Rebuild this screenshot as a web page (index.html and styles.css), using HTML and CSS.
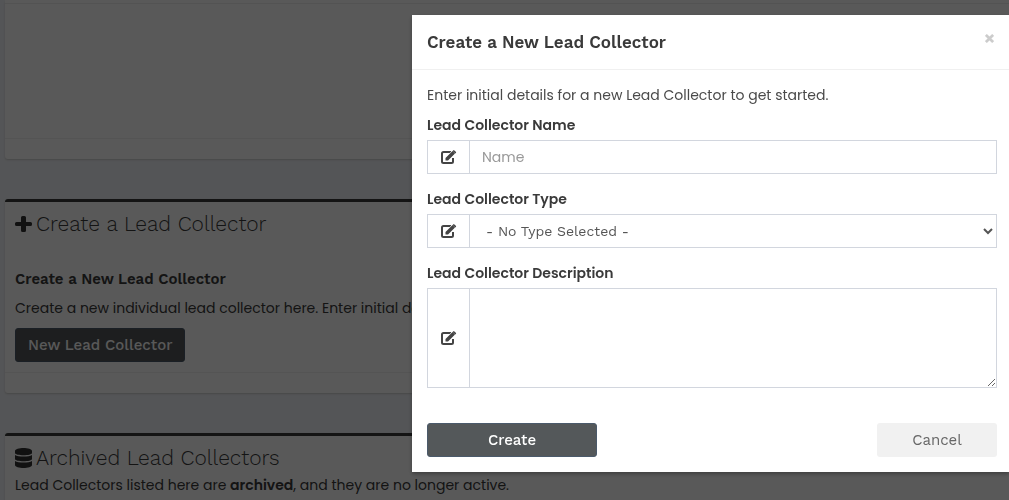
FILE: index.html
```
<!DOCTYPE html>
<html lang="en">
<head>
<meta charset="utf-8">
<title>Lead Collectors</title>
<meta name="viewport" content="width=device-width, initial-scale=1">
<link rel="stylesheet" href="styles.css">
</head>
<body>
<svg class="sprite" aria-hidden="true">
  <symbol id="edit" viewBox="0 0 16 14"><path fill="none" stroke="currentColor" stroke-width="2" d="M10 2H2.500Q1 2 1 3.500v8Q1 13 2.500 13h8Q12 13 12 11.500V8"/><path fill="currentColor" stroke="#fff" stroke-width="1.200" paint-order="stroke" d="M4.500 10.500V8L11.500 1l2.500 2.500-7 7zM12.200.4q.6-.6 1.200 0l1.400 1.400q.6.600 0 1.200l-.5.500L11.700.9z"/></symbol>
</svg>

<main class="page">
  <section class="panel listing">
    <div class="listing-body"></div>
    <div class="panel-foot"></div>
  </section>

  <section class="panel accent">
    <h2 class="panel-title">
      <svg class="title-icon" viewBox="0 0 17 18" aria-hidden="true"><path d="M7.500 1h2q1.500 0 1.500 1.500V7h4.500q1.500 0 1.500 1.500v1q0 1.500-1.500 1.500H11v4.500q0 1.500-1.500 1.500h-2Q6 17 6 15.500V11H1.500Q0 11 0 9.500v-1Q0 7 1.500 7H6V2.500Q6 1 7.500 1z"/></svg>
      Create a Lead Collector
    </h2>
    <div class="panel-body">
      <h3 class="subtitle">Create a New Lead Collector</h3>
      <p class="text">Create a new individual lead collector here. Enter initial details to get started.</p>
      <button class="btn btn-dark" type="button">New Lead Collector</button>
    </div>
    <div class="panel-foot"></div>
  </section>

  <section class="panel accent">
    <h2 class="panel-title">
      <svg class="title-icon" viewBox="0 0 17 20" aria-hidden="true"><path d="M0 3c0-4 17-4 17 0v2c0 3-17 3-17 0zM0 7c3 2 14 2 17 0v4c0 3-17 3-17 0zM0 13c3 2 14 2 17 0v4c0 4-17 4-17 0z"/></svg>
      Archived Lead Collectors
    </h2>
    <p class="text">Lead Collectors listed here are <strong>archived</strong>, and they are no longer active.</p>
  </section>
</main>

<div class="backdrop">
  <div class="modal" role="dialog" aria-modal="true" aria-labelledby="modal-title">
    <header class="modal-head">
      <h1 class="modal-title" id="modal-title">Create a New Lead Collector</h1>
      <button class="close" type="button" aria-label="Close"><svg viewBox="0 0 10 10" aria-hidden="true"><path d="M1 1l8 8M9 1L1 9"/></svg></button>
    </header>
    <form class="modal-body">
      <p class="intro">Enter initial details for a new Lead Collector to get started.</p>
      <div class="field">
        <label for="name">Lead Collector Name</label>
        <div class="group">
          <span class="addon"><svg aria-hidden="true"><use href="#edit"/></svg></span>
          <input class="control" id="name" type="text" placeholder="Name">
        </div>
      </div>
      <div class="field">
        <label for="type">Lead Collector Type</label>
        <div class="group">
          <span class="addon"><svg aria-hidden="true"><use href="#edit"/></svg></span>
          <select class="control select" id="type"><option>- No Type Selected -</option></select>
        </div>
      </div>
      <div class="field">
        <label for="description">Lead Collector Description</label>
        <div class="group">
          <span class="addon"><svg aria-hidden="true"><use href="#edit"/></svg></span>
          <textarea class="control area" id="description"></textarea>
        </div>
      </div>
      <div class="actions">
        <button class="btn btn-dark create" type="button">Create</button>
        <button class="btn btn-light" type="button">Cancel</button>
      </div>
    </form>
  </div>
</div>
</body>
</html>
```
FILE: styles.css
```
* { box-sizing: border-box; }
body {
  margin: 0;
  height: 100vh;
  overflow: hidden;
  background: #f0f3f8;
  color: #3a3a3a;
  font: 400 14px/20px Poppins, Inter, sans-serif;
}
h1, h2, h3, p { margin: 0; }
strong { font-weight: 600; }
.sprite { display: none; }

.page {
  display: flex;
  flex-direction: column;
  gap: 40px;
  padding-left: 5px;
}
.panel {
  background: #fff;
  border-radius: 3px;
  box-shadow: 0 1px 2px #ccc;
}
.accent { border-top: 3px solid #393939; }
.listing-body {
  height: 138px;
  border-top: 3px solid #fff;
  box-shadow: inset 0 1px #eee;
}
.panel-foot {
  height: 21px;
  border-top: 1px solid #f0f0f0;
}
.panel-title {
  display: flex;
  align-items: center;
  gap: 4px;
  padding: 9px 10px 0;
  font: 300 21px/26px "Work Sans", Inter, sans-serif;
}
.title-icon { width: 17px; height: 20px; fill: #333; }
.panel-body { padding: 32px 10px 10px; }
.subtitle {
  margin-bottom: 9px;
  font: 600 15px/20px "Work Sans", Inter, sans-serif;
}
.text { white-space: nowrap; }
.panel-body .text { margin-bottom: 10px; }
.panel-title + .text { padding: 4px 10px 20px; }

.btn {
  height: 34px;
  padding: 0 12px;
  border: 1px solid transparent;
  border-radius: 3px;
  font: 500 15px/20px "Work Sans", Inter, sans-serif;
}
.btn-dark {
  background: #54585a;
  border-color: #4b5a6b;
  color: #fff;
}
.btn-light {
  width: 120px;
  background: #f1f1f1;
  color: #666;
  font-weight: 400;
}
.create { width: 170px; }

.backdrop {
  position: fixed;
  inset: 0;
  padding: 15px 0 0 412px;
  background: rgba(0, 0, 0, 0.65);
}
.modal {
  background: #fff;
  box-shadow: 0 2px 4px rgba(0, 0, 0, 0.3);
}
.modal-head {
  display: flex;
  justify-content: space-between;
  align-items: flex-start;
  padding: 15px 15px 14px;
  border-bottom: 1px solid #f0f0f0;
}
.modal-title { font: 600 17px/25px "Work Sans", Inter, sans-serif; }
.close {
  display: flex;
  padding: 4px 0;
  border: 0;
  background: none;
}
.close svg {
  width: 9px;
  height: 9px;
  fill: none;
  stroke: #ccc;
  stroke-width: 3;
}
.modal-body { padding: 15px 12px 15px 15px; }
.intro { margin-bottom: 10px; color: #4a4a4a; }
.field { margin-bottom: 15px; }
.field label {
  display: block;
  margin-bottom: 5px;
  font-weight: 600;
}
.group { display: flex; }
.addon {
  display: flex;
  flex: 0 0 42px;
  align-items: center;
  justify-content: center;
  border: 1px solid #d2d6de;
  border-right: 0;
}
.addon svg { width: 16px; height: 14px; color: #444; }
.control {
  flex: 1;
  min-width: 0;
  height: 34px;
  padding: 6px 12px;
  border: 1px solid #d2d6de;
  border-radius: 0;
  background: #fff;
  color: #555;
  font: 14px/20px Poppins, Inter, sans-serif;
}
.control::placeholder { color: #999; }
.select {
  padding: 0 0 0 12px;
  font-family: "Work Sans", Inter, sans-serif;
}
.area { height: 100px; resize: vertical; }
.actions {
  display: flex;
  justify-content: space-between;
  padding-top: 20px;
}
```
